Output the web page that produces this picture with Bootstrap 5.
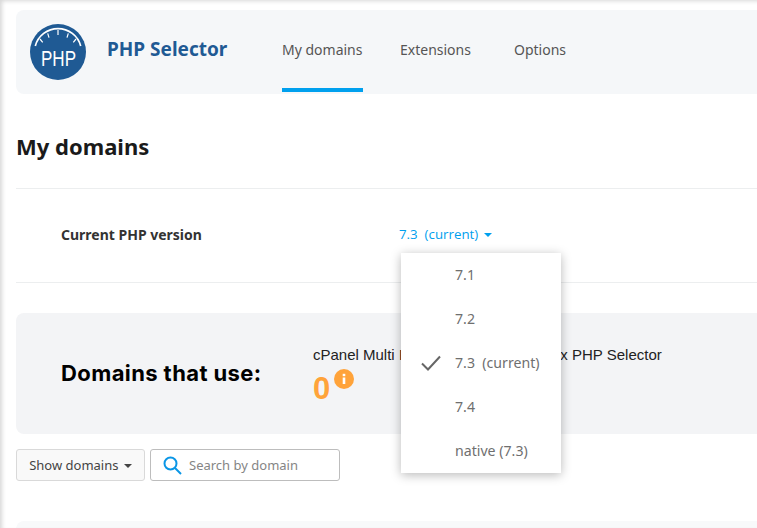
<!DOCTYPE html>
<html lang="en">
<head>
<meta charset="utf-8">
<title>PHP Selector</title>
<link href="https://cdn.jsdelivr.net/npm/bootstrap@5.3.0/dist/css/bootstrap.min.css" rel="stylesheet">
<style>
html,body{height:528px;overflow:hidden}
body{font-family:"Noto Sans","Open Sans",sans-serif;font-size:14px;color:#555;background:#fff;position:relative}
.edge-shade{position:absolute;inset:0;box-shadow:inset 3px 2px 4px -1px rgba(0,0,0,.16);pointer-events:none;z-index:5}
.page-wrap{padding:10px 0 0 16px;width:757px}
.app-head{height:84px;background:#f5f7f9;border-radius:8px 0 0 8px;padding-left:14px}
.brand-logo{width:56px;height:56px;flex:none;margin-top:-1px}
.brand-name{font-size:19px;font-weight:700;color:#1f5a94;margin-left:21px;width:175px;line-height:27px;margin-top:-6px}
.tab-nav{gap:37px;height:84px}
.tab-nav .nav-link{padding:0;height:82px;line-height:80px;color:#555;font-size:14px;border-bottom:4px solid transparent}
.tab-nav .nav-link.active{border-bottom-color:#00a0ee;width:81px}
.tab-nav .nav-link:nth-child(3){margin-left:6px}
.page-title{font-size:22px;font-weight:700;color:#1a1a1a;margin:38px 0 0 0;line-height:28px;height:56px}
.version-row{height:95px;border-top:1px solid #eceeef;border-bottom:1px solid #eceeef;position:relative}
.version-label{font-weight:700;font-size:14px;color:#333;width:383px;padding-left:45px;margin-top:36px;line-height:19px;flex:none}
.version-toggle{color:#00a0ee;font-family:"Open Sans",sans-serif;font-size:13.3px;text-decoration:none;margin-top:36px;line-height:19px;height:19px}
.caret-down{display:inline-block;border-top:4px solid currentColor;border-left:4px solid transparent;border-right:4px solid transparent;vertical-align:2px;margin-left:2px}
.version-menu{position:absolute;left:385px;top:64px;width:160px;height:220px;background:#fff;box-shadow:0 2px 10px rgba(0,0,0,.28);z-index:3;padding:0;border:0;border-radius:0;display:block}
.version-menu .version-item{height:44px;line-height:44px;padding:0 0 0 54px;color:#6f6f6f;font-size:14.15px;position:relative;background:none}
.check-mark{position:absolute;left:20px;top:14px;width:20px;height:16px}
.usage-panel{margin-top:30px;height:121px;background:#f3f4f6;border-radius:8px 0 0 8px;padding-left:45px}
.usage-title{font-family:Inter,sans-serif;font-size:22px;letter-spacing:.4px;font-weight:700;color:#000;width:252px;flex:none;line-height:26px;margin-top:47px}
.usage-block{padding-top:33px;white-space:nowrap}
.usage-name{font-family:"Liberation Sans",sans-serif;font-size:15px;color:#222;line-height:18px}
.name-hidden{word-spacing:15px}
.usage-count{font-family:"Liberation Sans",sans-serif;font-weight:700;font-size:31px;line-height:36px;color:#ffa33a;display:flex;height:36px;margin-top:7px}
.info-dot{width:20px;height:20px;margin:-2px 0 0 4px}
.filter-row{margin-top:15px;gap:5px}
.show-btn{height:32px;width:129px;padding:1px 0 0;font-size:13px;background:#f9f9f9;color:#444;border:1px solid #d9d9d9;border-radius:3px}
.search-box{width:190px;height:32px;border:1px solid #bdbdbd;border-radius:3px;background:#fff;padding-left:12px;gap:7px}
.search-box svg{width:19px;height:19px;flex:none}
.search-box input{border:0;outline:0;padding:1px 0 0;width:150px;font-size:13px;color:#777;background:none}
.search-box input::placeholder{color:#858585;opacity:1}
.next-panel{margin-top:40px;height:30px;background:#f8f9fa;border-radius:8px 0 0 0}
</style>
</head>
<body>
<div class="edge-shade"></div>
<div class="page-wrap">
  <header class="app-head d-flex align-items-center">
    <svg class="brand-logo" viewBox="0 0 56 56" role="img" aria-label="PHP logo">
      <circle cx="28" cy="28" r="28" fill="#1f5a94"/>
      <path d="M5.300 22A23.500 23.500 0 0 1 50.700 22" fill="none" stroke="#fff" stroke-width="1.700"/>
      <path d="M28 6v5M17.700 9.300l1.300 4.400M38.300 9.300l-1.300 4.400M10 15l2.700 3.300M46 15l-2.700 3.300" stroke="#fff" stroke-width="1.200"/>
      <text x="11" y="42" textLength="35" lengthAdjust="spacingAndGlyphs" font-family="Liberation Sans,sans-serif" font-size="22" fill="#fff">PHP</text>
    </svg>
    <div class="brand-name">PHP Selector</div>
    <nav class="nav tab-nav">
      <a class="nav-link active" href="#">My domains</a>
      <a class="nav-link" href="#">Extensions</a>
      <a class="nav-link" href="#">Options</a>
    </nav>
  </header>
  <h1 class="page-title">My domains</h1>
  <div class="version-row d-flex">
    <div class="version-label">Current PHP version</div>
    <a class="version-toggle" href="#">7.3&nbsp; (current) <span class="caret-down"></span></a>
    <div class="dropdown-menu version-menu">
      <div class="version-item">7.1</div>
      <div class="version-item">7.2</div>
      <div class="version-item"><svg class="check-mark" viewBox="0 0 20 16"><path d="M1 8.500l6 6L19 1.500" fill="none" stroke="#666" stroke-width="2"/></svg>7.3&nbsp; (current)</div>
      <div class="version-item">7.4</div>
      <div class="version-item">native (7.3)</div>
    </div>
  </div>
  <section class="usage-panel d-flex">
    <div class="usage-title">Domains that use:</div>
    <div class="usage-block">
      <div class="usage-name">cPanel Multi <span class="name-hidden">PHP and CloudLinux</span> PHP Selector</div>
      <div class="usage-count">0
        <svg class="info-dot" viewBox="0 0 20 20"><circle cx="10" cy="10" r="10" fill="#ffa33a"/><rect x="8.700" y="8.500" width="2.600" height="6.500" fill="#fff"/><rect x="8.700" y="4.800" width="2.600" height="2.400" fill="#fff"/></svg>
      </div>
    </div>
  </section>
  <div class="filter-row d-flex">
    <button class="btn show-btn" type="button">Show domains <span class="caret-down"></span></button>
    <label class="search-box d-flex align-items-center">
      <svg viewBox="0 0 19 19"><circle cx="7.500" cy="7.500" r="6" fill="none" stroke="#0a96e6" stroke-width="2"/><path d="M12 12l6 6" stroke="#0a96e6" stroke-width="2"/></svg>
      <input type="text" placeholder="Search by domain">
    </label>
  </div>
  <div class="next-panel"></div>
</div>
<script src="https://cdn.jsdelivr.net/npm/bootstrap@5.3.0/dist/js/bootstrap.bundle.min.js"></script>
</body>
</html>
